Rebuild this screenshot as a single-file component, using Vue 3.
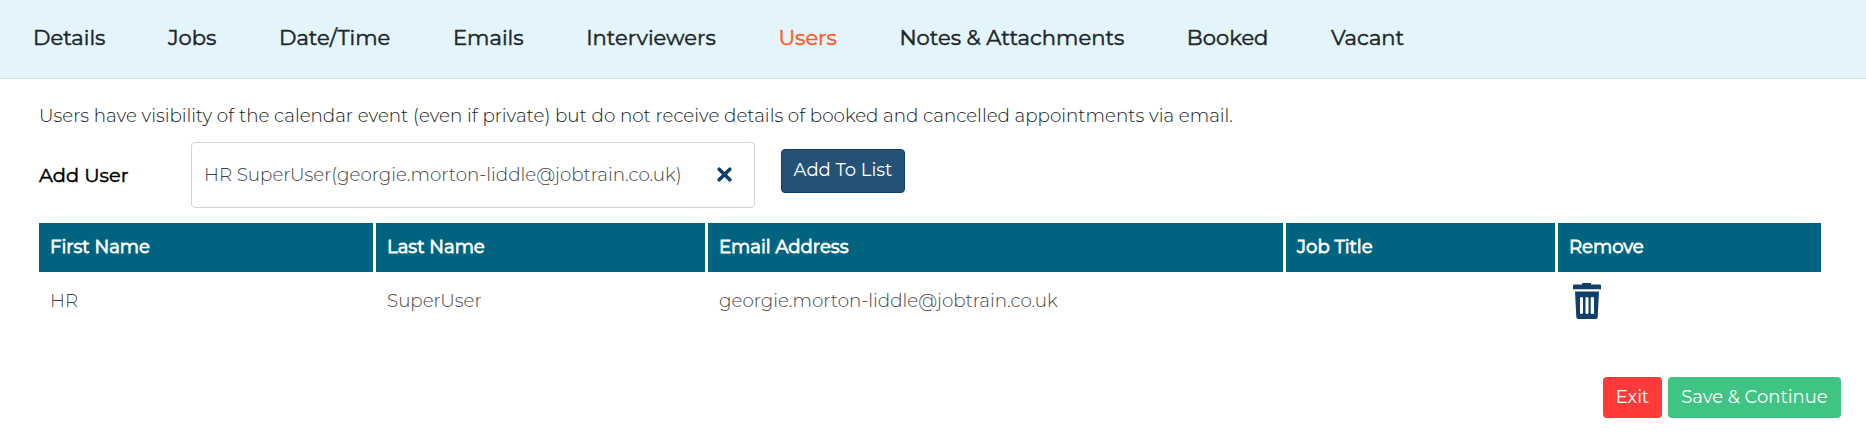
<template>
  <div class="page">
    <nav class="tabs">
      <a
        v-for="tab in tabs"
        :key="tab"
        href="#"
        class="tab"
        :class="{ active: tab === activeTab }"
        @click.prevent="activeTab = tab"
        >{{ tab }}</a
      >
    </nav>

    <div class="content">
      <p class="intro">
        Users have visibility of the calendar event (even if private) but do not receive details of
        booked and cancelled appointments via email.
      </p>

      <div class="add-row">
        <label class="add-label">Add User</label>
        <div class="user-select">
          <span class="selected">{{ selected }}</span>
          <button v-if="selected" class="clear-btn" aria-label="Clear" @click="selected = ''">
            <svg width="15" height="15" viewBox="0 0 15 15">
              <path d="M2.2 2.2 L12.8 12.8 M12.8 2.2 L2.2 12.8" />
            </svg>
          </button>
        </div>
        <button class="btn add-btn" @click="addUser">Add To List</button>
      </div>

      <table class="user-table">
        <colgroup>
          <col class="col-first" />
          <col class="col-last" />
          <col class="col-email" />
          <col class="col-job" />
          <col class="col-remove" />
        </colgroup>
        <thead>
          <tr>
            <th>First Name</th>
            <th>Last Name</th>
            <th>Email Address</th>
            <th>Job Title</th>
            <th>Remove</th>
          </tr>
        </thead>
        <tbody>
          <tr v-for="(user, index) in users" :key="index">
            <td>{{ user.firstName }}</td>
            <td>{{ user.lastName }}</td>
            <td>{{ user.email }}</td>
            <td>{{ user.jobTitle }}</td>
            <td>
              <button class="remove-btn" aria-label="Remove" @click="removeUser(index)">
                <svg width="28" height="36" viewBox="0 0 28 36">
                  <path
                    d="M1 1.5H9V0.5Q9 0 9.5 0H17.5Q18 0 18 0.5V1.5H27Q28 1.5 28 2.5V6.3H0V2.5Q0 1.5 1 1.5Z"
                  />
                  <path
                    fill-rule="evenodd"
                    d="M2 8.5H26L24.7 34.2Q24.5 36 22.7 36H5.3Q3.5 36 3.3 34.2ZM8.3 14Q7 14 7 15.3V29.7Q7 31 8.3 31T10 29.7V15.3Q10 14 8.3 14ZM14 14Q12.5 14 12.5 15.3V29.7Q12.5 31 14 31T15.5 29.7V15.3Q15.5 14 14 14ZM19.5 14Q17.7 14 17.7 15.3V29.7Q17.7 31 19.5 31T21 29.7V15.3Q21 14 19.5 14Z"
                  />
                </svg>
              </button>
            </td>
          </tr>
        </tbody>
      </table>
    </div>

    <div class="actions">
      <button class="btn exit-btn">Exit</button>
      <button class="btn save-btn">Save &amp; Continue</button>
    </div>
  </div>
</template>

<script setup>
import { ref } from 'vue'

const tabs = [
  'Details',
  'Jobs',
  'Date/Time',
  'Emails',
  'Interviewers',
  'Users',
  'Notes & Attachments',
  'Booked',
  'Vacant',
]

const activeTab = ref('Users')
const selected = ref('HR SuperUser(georgie.morton-liddle@jobtrain.co.uk)')
const users = ref([
  {
    firstName: 'HR',
    lastName: 'SuperUser',
    email: 'georgie.morton-liddle@jobtrain.co.uk',
    jobTitle: '',
  },
])

function addUser() {
  const match = selected.value.match(/^(\S+) (.+)\((.+)\)$/)
  if (!match || users.value.some((user) => user.email === match[3])) return
  users.value.push({ firstName: match[1], lastName: match[2], email: match[3], jobTitle: '' })
}

function removeUser(index) {
  users.value.splice(index, 1)
}
</script>

<style>
body {
  margin: 0;
  background: #fff;
}
</style>

<style scoped>
.page {
  min-height: 447px;
  font-family: Montserrat, Inter, 'Liberation Sans', sans-serif;
  font-size: 18.3px;
  font-weight: 300;
  color: #111518;
}

.tabs {
  display: flex;
  align-items: center;
  gap: 62.6px;
  box-sizing: border-box;
  height: 79px;
  padding: 0 0 3px 33px;
  background: #e3f5fa;
  border-bottom: 1px solid #dee2e6;
}

.tab {
  flex: none;
  font-size: 21.1px;
  font-weight: 400;
  line-height: 26px;
  white-space: nowrap;
  color: #212529;
  text-decoration: none;
  -webkit-text-stroke: 0.5px currentColor;
}

.tab.active {
  color: #ff5a2d;
}

.content {
  padding: 23px 45px 0 39px;
}

.intro {
  margin: 0;
  line-height: 28px;
}

.add-row {
  display: flex;
  align-items: center;
  height: 66px;
  margin: 12px 0 15px;
}

.add-label {
  width: 152px;
  font-size: 19.4px;
  font-weight: 400;
  color: #000;
  -webkit-text-stroke: 0.5px currentColor;
}

.user-select {
  display: flex;
  align-items: center;
  justify-content: space-between;
  box-sizing: border-box;
  width: 564px;
  height: 66px;
  padding: 0 22px 1px 12px;
  border: 1px solid #ced4da;
  border-radius: 4px;
  color: #3c4248;
  white-space: nowrap;
}

.clear-btn,
.remove-btn {
  display: block;
  padding: 0;
  border: none;
  background: none;
  cursor: pointer;
}

.clear-btn svg,
.remove-btn svg {
  display: block;
}

.clear-btn path {
  fill: none;
  stroke: #0f406b;
  stroke-width: 3.6;
  stroke-linecap: round;
}

.btn {
  box-sizing: border-box;
  height: 41px;
  padding: 0 0 1px;
  border: 1px solid transparent;
  border-radius: 4px;
  font: inherit;
  font-size: 18px;
  font-weight: 400;
  color: #fff;
  text-align: center;
  cursor: pointer;
}

.add-btn {
  width: 124px;
  height: 44px;
  margin: 0 0 8px 26px;
  padding-bottom: 3px;
  background: #265276;
  border-color: #0f406b;
}

.user-table {
  width: 1782px;
  border-collapse: separate;
  border-spacing: 0;
  table-layout: fixed;
}

.col-first {
  width: 337px;
}

.col-last {
  width: 332px;
}

.col-email {
  width: 578px;
}

.col-job {
  width: 272px;
}

.user-table th {
  box-sizing: border-box;
  height: 49px;
  padding: 0 11px 2px;
  background: #006480;
  border-right: 3px solid #fff;
  color: #fff;
  font-size: 18.1px;
  font-weight: 400;
  text-align: left;
  -webkit-text-stroke: 0.8px currentColor;
}

.user-table th:last-child {
  border-right: none;
}

.user-table td {
  height: 56px;
  padding: 0 11px;
  color: #444;
}

.remove-btn {
  margin: 2px 0 0 4px;
}

.remove-btn path {
  fill: #0f406b;
}

.actions {
  display: flex;
  justify-content: flex-end;
  gap: 6px;
  padding: 49px 25px 0 0;
}

.exit-btn {
  width: 59px;
  background: #ff3a3a;
}

.save-btn {
  width: 173px;
  background: #40c483;
}
</style>
